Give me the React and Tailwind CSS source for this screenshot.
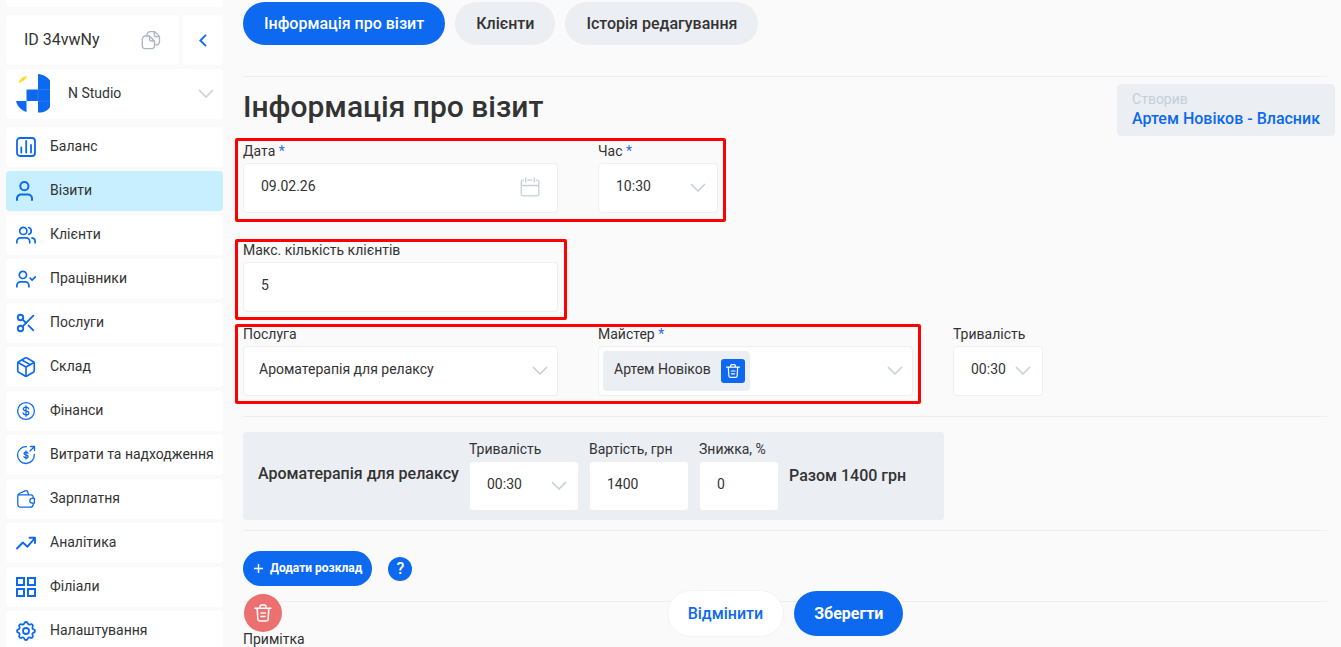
import { Scissors, Package } from "lucide-react";
import { TbSettings } from "react-icons/tb";

function Glyph({ children, size = 20, width = 1.7, view = "0 0 20 20" }) {
  return (
    <svg
      width={size}
      height={size}
      viewBox={view}
      fill="none"
      stroke="currentColor"
      strokeWidth={width}
      strokeLinecap="round"
      strokeLinejoin="round"
      aria-hidden="true"
      className="shrink-0"
    >
      {children}
    </svg>
  );
}

function Chevron() {
  return (
    <svg width="16" height="9" viewBox="0 0 16 9" fill="none" stroke="#c5cedb" strokeWidth="1.5" aria-hidden="true">
      <path d="M1 1l7 7 7-7" />
    </svg>
  );
}

function Trash({ size }) {
  return (
    <Glyph size={size} width={1.5}>
      <path d="M2 5.2h16M7 5V3.4C7 2.6 7.6 2 8.4 2h3.2c.8 0 1.4.6 1.4 1.4V5M4.2 5.4l.6 10.8c.1 1 .9 1.8 1.9 1.8h6.6c1 0 1.8-.8 1.9-1.8l.6-10.8M8 10h4.5M8 13.5h4" />
    </Glyph>
  );
}

function Logo() {
  return (
    <svg width="34" height="39" viewBox="0 0 34 39" aria-hidden="true">
      <path d="M2.300 8.800C3.500 5.500 6.500 2.800 11 1.700 10 5 6.500 8 2.300 8.800z" fill="#ffd91a" />
      <path d="M22 0c5 .4 9.500 3 12 6.500V33c-2 3.500-7 6-12 5.500V27H10.500V15.500H22zM0 27h10.500v11C5 36 1 32 0 27z" fill="#0d69f0" />
      <path d="M22 15.500h12M22 27.200h12M22 15.500v11.500" stroke="#3d88f4" strokeWidth=".6" />
    </svg>
  );
}

const menu = [
  {
    label: "Баланс",
    icon: (
      <Glyph width={1.8}>
        <rect x="1" y="1" width="18" height="18" rx="3" />
        <path d="M5.300 10.500v5M10.200 4v11.500M15 8v7.500" />
      </Glyph>
    ),
  },
  {
    label: "Візити",
    active: true,
    icon: (
      <Glyph width={2}>
        <circle cx="8.400" cy="5.200" r="4.100" />
        <path d="M1 19v-1.500a4 4 0 0 1 4-4h7a4 4 0 0 1 4 4V19" />
      </Glyph>
    ),
  },
  {
    label: "Клієнти",
    icon: (
      <Glyph>
        <circle cx="7.300" cy="5.900" r="3.600" />
        <path d="M.900 17.800v-1.500a3.500 3.500 0 0 1 3.500-3.500h5.800a3.500 3.500 0 0 1 3.500 3.500v1.500M12.800 2.500a3.600 3.600 0 0 1 0 6.800M16 12.800a3.500 3.500 0 0 1 3.100 3.500v1.500" />
      </Glyph>
    ),
  },
  {
    label: "Працівники",
    icon: (
      <Glyph>
        <circle cx="6.900" cy="5.900" r="3.600" />
        <path d="M.900 17.800v-1.500a3.500 3.500 0 0 1 3.500-3.500h5a3.500 3.500 0 0 1 3.500 3.500v1.500M14.200 9.200l1.900 1.900 3.200-3.200" />
      </Glyph>
    ),
  },
  { label: "Послуги", icon: <Scissors size={22} strokeWidth={2} className="-mx-px shrink-0" aria-hidden="true" /> },
  { label: "Склад", icon: <Package size={22} strokeWidth={1.8} className="-mx-px shrink-0" aria-hidden="true" /> },
  {
    label: "Фінанси",
    icon: (
      <Glyph width={1.3}>
        <circle cx="10" cy="10" r="8.400" />
        <path d="M12.700 7.800c-.300-1-1.300-1.600-2.700-1.600-1.600 0-2.700.700-2.700 1.900 0 2.700 5.500 1.100 5.500 3.800 0 1.200-1.200 1.900-2.800 1.900-1.500 0-2.600-.700-2.900-1.800M10 4.800v10.400" />
      </Glyph>
    ),
  },
  {
    label: "Витрати та надходження",
    icon: (
      <Glyph width={1.3}>
        <path d="M10.500 1.700A8.400 8.400 0 1 0 18.300 9.500M14 6l4.500-4.500M14.500 1.500h4v4" />
        <path d="M12 8.300c-.300-.700-1-1.100-2-1.100-1.200 0-2 .500-2 1.300 0 2 4.100.900 4.100 2.900 0 .900-.900 1.400-2.100 1.400-1.100 0-1.900-.500-2.100-1.200M10 6v8" />
      </Glyph>
    ),
  },
  {
    label: "Зарплатня",
    icon: (
      <Glyph width={1.3}>
        <path d="M17.200 9.300V8.200A2.400 2.400 0 0 0 14.800 5.800H3.400c-1 0-1.600.600-1.600 1.600V15A3.200 3.200 0 0 0 5 18.200h9.200a3 3 0 0 0 3-3v-1.100M1.900 6.800c0-1.200.400-1.900 1.400-2.300L9 1.800c1.200-.500 2.200-.100 2.600 1l1 2.800M18.400 9.300h-2.200a2.400 2.400 0 0 0 0 4.800h2.200z" />
      </Glyph>
    ),
  },
  {
    label: "Аналітика",
    icon: (
      <Glyph width={1.9}>
        <path d="M1 15.500l5.800-6 4.700 4.200 7-8.200M13.500 4.800h5.500v5.200" />
      </Glyph>
    ),
  },
  {
    label: "Філіали",
    icon: (
      <svg width="20" height="20" viewBox="0 0 20 20" fill="none" stroke="currentColor" strokeWidth="2" aria-hidden="true" className="shrink-0">
        <path d="M1 1h7v7H1zM12 1h7v7h-7zM1 12h7v7H1zM12 12h7v7h-7z" />
      </svg>
    ),
  },
  { label: "Налаштування", icon: <TbSettings size={24} strokeWidth={1.8} className="-mx-0.5 shrink-0" aria-hidden="true" /> },
];

const boxClass =
  "h-[50px] w-full appearance-none rounded border border-[#eeeff1] bg-white pb-1 text-sm text-[#333] outline-none";

function Field({ id, label, required, className, children }) {
  return (
    <div className={className}>
      <label htmlFor={id} className="mb-[5px] block text-sm leading-[14px] whitespace-nowrap">
        {label}
        {required && <span className="text-[#2f6bf5]"> *</span>}
      </label>
      <div className="relative">{children}</div>
    </div>
  );
}

function Select({ id, value, pad = "pl-[17px]", arrow = "right-3" }) {
  return (
    <>
      <select id={id} className={`${boxClass} ${pad}`}>
        <option>{value}</option>
      </select>
      <span className={`pointer-events-none absolute top-5 ${arrow}`}>
        <Chevron />
      </span>
    </>
  );
}

function Sidebar() {
  return (
    <aside className="w-[223px] shrink-0 pl-1.5">
      <div className="h-[7px] rounded-b bg-white" />
      <div className="mt-2 flex gap-1">
        <div className="flex h-[50px] flex-1 items-center justify-between rounded bg-white pr-[18px] pl-[18px]">
          <span className="text-base">ID 34vwNy</span>
          <button type="button" aria-label="Копіювати" className="text-[#a9b6c2]">
            <Glyph width={1.3}>
              <path d="M8.500 6H4.500A3.200 3.200 0 0 0 1.300 9.200v6.200a3.200 3.200 0 0 0 3.200 3.200h5.800a3.200 3.200 0 0 0 3.200-3.200V11zM8.500 6v2.800c0 1.300.900 2.200 2.200 2.200h2.800" />
              <path d="M5.800 5.800C6 3 7.200 1.600 9.200 1.600h4.500l4.800 4.800v5.400c0 2.200-1.500 3.300-4.800 3.300M13.300 1.800v2.600c0 1.300.900 2.200 2.200 2.200h2.800" />
            </Glyph>
          </button>
        </div>
        <button type="button" aria-label="Згорнути меню" className="flex h-[50px] w-10 items-center justify-center rounded bg-white text-[#0d69f0]">
          <svg width="8" height="13" viewBox="0 0 8 13" fill="none" stroke="currentColor" strokeWidth="1.800" aria-hidden="true">
            <path d="M7 .800L1.300 6.500 7 12.200" />
          </svg>
        </button>
      </div>
      <button type="button" className="mt-1 flex h-[50px] w-full items-center rounded bg-white pr-[9px] pb-0.5 pl-2.5 text-left text-sm">
        <Logo />
        <span className="ml-[18px] flex-1">N Studio</span>
        <Chevron />
      </button>
      <nav className="mt-2 flex flex-col gap-1">
        {menu.map((item) => (
          <a
            key={item.label}
            href="#"
            className={`flex h-10 shrink-0 items-center gap-3.5 rounded pl-2.5 text-sm whitespace-nowrap ${item.active ? "bg-[#c8efff]" : "bg-white"}`}
          >
            <span className="flex text-[#0d69f0]">{item.icon}</span>
            <span className="pb-0.5">{item.label}</span>
          </a>
        ))}
      </nav>
    </aside>
  );
}

export default function App() {
  return (
    <div className="flex h-screen overflow-hidden bg-[#fafafa] font-['Roboto',sans-serif] text-[#333]">
      <Sidebar />
      <main className="relative min-w-0 flex-1 pt-0.5 pr-3.5 pl-5">
        <div className="flex gap-2.5 text-base font-medium">
          <button type="button" className="h-[43px] rounded-full bg-[#0d69f0] px-[21px] text-white">Інформація про візит</button>
          <button type="button" className="h-[43px] rounded-full bg-[#ebeef3] px-[21px]">Клієнти</button>
          <button type="button" className="h-[43px] rounded-full bg-[#ebeef3] px-[21px]">Історія редагування</button>
        </div>
        <hr className="mt-[31px] border-[#eeeeef]" />

        <div className="-mr-2 flex h-[61px] items-start justify-between">
          <h1 className="mt-2.5 text-[30px] leading-10 font-medium">Інформація про візит</h1>
          <div className="mt-[7px] rounded bg-[#ebeef3] px-[15px] pt-[5px] pb-2">
            <div className="text-sm leading-5 text-[#c5cedb]">Створив</div>
            <div className="text-base leading-[19px] font-medium text-[#0d69f0]">Артем Новіков - Власник</div>
          </div>
        </div>

        <form onSubmit={(e) => e.preventDefault()}>
          <div className="-ml-2 flex w-fit gap-10 rounded-xs border-3 border-[#ff0000] px-[5px] pt-[3px] pb-1.5">
            <Field id="date" label="Дата" required className="w-[315px]">
              <input id="date" defaultValue="09.02.26" className={`${boxClass} pl-[17px]`} />
              <span className="pointer-events-none absolute top-3.5 right-[18px] text-[#c5cedb]">
                <Glyph width={1.3}>
                  <path d="M3.500 3.200h-.5A1.800 1.800 0 0 0 1.200 5v12A1.800 1.800 0 0 0 3 18.800h14a1.800 1.800 0 0 0 1.800-1.800V5A1.800 1.800 0 0 0 17 3.200h-.5M8 3.200h4M5.700 1v4M14.300 1v4M1.200 8.500h17.600" />
                </Glyph>
              </span>
            </Field>
            <Field id="time" label="Час" required className="w-[120px]">
              <Select id="time" value="10:30" />
            </Field>
          </div>

          <div className="mt-[17px] -ml-2 w-fit rounded-xs border-3 border-[#ff0000] pt-px pr-1.5 pb-[5px] pl-[5px]">
            <Field id="max" label="Макс. кількість клієнтів" className="w-[315px]">
              <input id="max" defaultValue="5" className={`${boxClass} pl-[17px]`} />
            </Field>
          </div>

          <div className="mt-1 -ml-2 flex gap-8">
            <div className="flex gap-10 rounded-xs border-3 border-[#ff0000] px-[5px] pb-[5px]">
              <Field id="service" label="Послуга" className="w-[315px]">
                <Select id="service" value="Ароматерапія для релаксу" pad="pl-[15px]" arrow="right-2.5" />
              </Field>
              <Field id="master" label="Майстер" required className="w-[315px]">
                <div className="flex h-[50px] items-center justify-between rounded border border-[#eeeff1] bg-white pr-[9px] pl-1">
                  <div className="flex h-10 items-center gap-2.5 rounded bg-[#ebeef3] pr-[5px] pl-[11px] text-sm">
                    <span className="pb-1">Артем Новіков</span>
                    <button type="button" aria-label="Видалити майстра" className="flex size-6 items-center justify-center rounded-[3px] bg-[#0d69f0] text-white">
                      <Trash size={16} />
                    </button>
                  </div>
                  <button type="button" id="master" aria-label="Обрати майстра" className="pb-0.5">
                    <Chevron />
                  </button>
                </div>
              </Field>
            </div>
            <Field id="duration" label="Тривалість" className="w-[90px] pt-[3px]">
              <Select id="duration" value="00:30" />
            </Field>
          </div>

          <hr className="mt-3 border-[#eeeeef]" />

          <div className="mt-[15px] flex h-[88px] w-[701px] items-start rounded bg-[#ebeef3] pt-2.5 pl-[15px]">
            <div className="w-[211px] pt-5 text-base leading-6 font-medium whitespace-nowrap">Ароматерапія для релаксу</div>
            <div className="flex gap-2.5">
              <Field id="line-duration" label="Тривалість" className="w-[110px]">
                <Select id="line-duration" value="00:30" />
              </Field>
              <Field id="price" label="Вартість, грн" className="w-[100px]">
                <input id="price" defaultValue="1400" className={`${boxClass} pl-[17px]`} />
              </Field>
              <Field id="discount" label="Знижка, %" className="w-20">
                <input id="discount" defaultValue="0" className={`${boxClass} pl-[17px]`} />
              </Field>
              <div className="pt-[22px] text-base leading-6 font-medium whitespace-nowrap">Разом 1400 грн</div>
            </div>
          </div>

          <hr className="mt-2.5 border-[#eeeeef]" />

          <div className="mt-5 flex items-center gap-4">
            <button type="button" className="flex h-[35px] items-center gap-1.5 rounded-full bg-[#0d69f0] px-2.5 pb-px text-xs font-bold text-white">
              <svg width="11" height="11" viewBox="0 0 11 11" stroke="currentColor" strokeWidth="1.500" aria-hidden="true">
                <path d="M5.500 1v9M1 5.500h9" />
              </svg>
              Додати розклад
            </button>
            <button type="button" className="mt-px size-6 rounded-full bg-[#0d69f0] text-base leading-6 font-medium text-white">?</button>
          </div>

          <hr className="mt-[15px] border-[#eeeeef]" />
          <label htmlFor="note" className="mt-[30px] block text-sm leading-[14px]">Примітка</label>
          <textarea id="note" className="mt-[5px] h-24 w-full rounded border border-[#eeeff1] bg-white" />
        </form>

        <footer className="absolute right-3.5 bottom-2.5 left-5 grid grid-cols-[1fr_auto_1fr] items-center">
          <button type="button" aria-label="Видалити візит" className="mb-0.5 ml-px flex size-[38px] items-center justify-center rounded-full bg-[#ed7070] text-white">
            <Trash size={20} />
          </button>
          <div className="flex items-center gap-2.5 text-base">
            <button type="button" className="h-[47px] rounded-full border border-[#f1f2f4] bg-white px-5 font-medium text-[#0d69f0]">Відмінити</button>
            <button type="button" className="h-[45px] rounded-full bg-[#0d69f0] px-5 font-bold text-white">Зберегти</button>
          </div>
        </footer>
      </main>
    </div>
  );
}
